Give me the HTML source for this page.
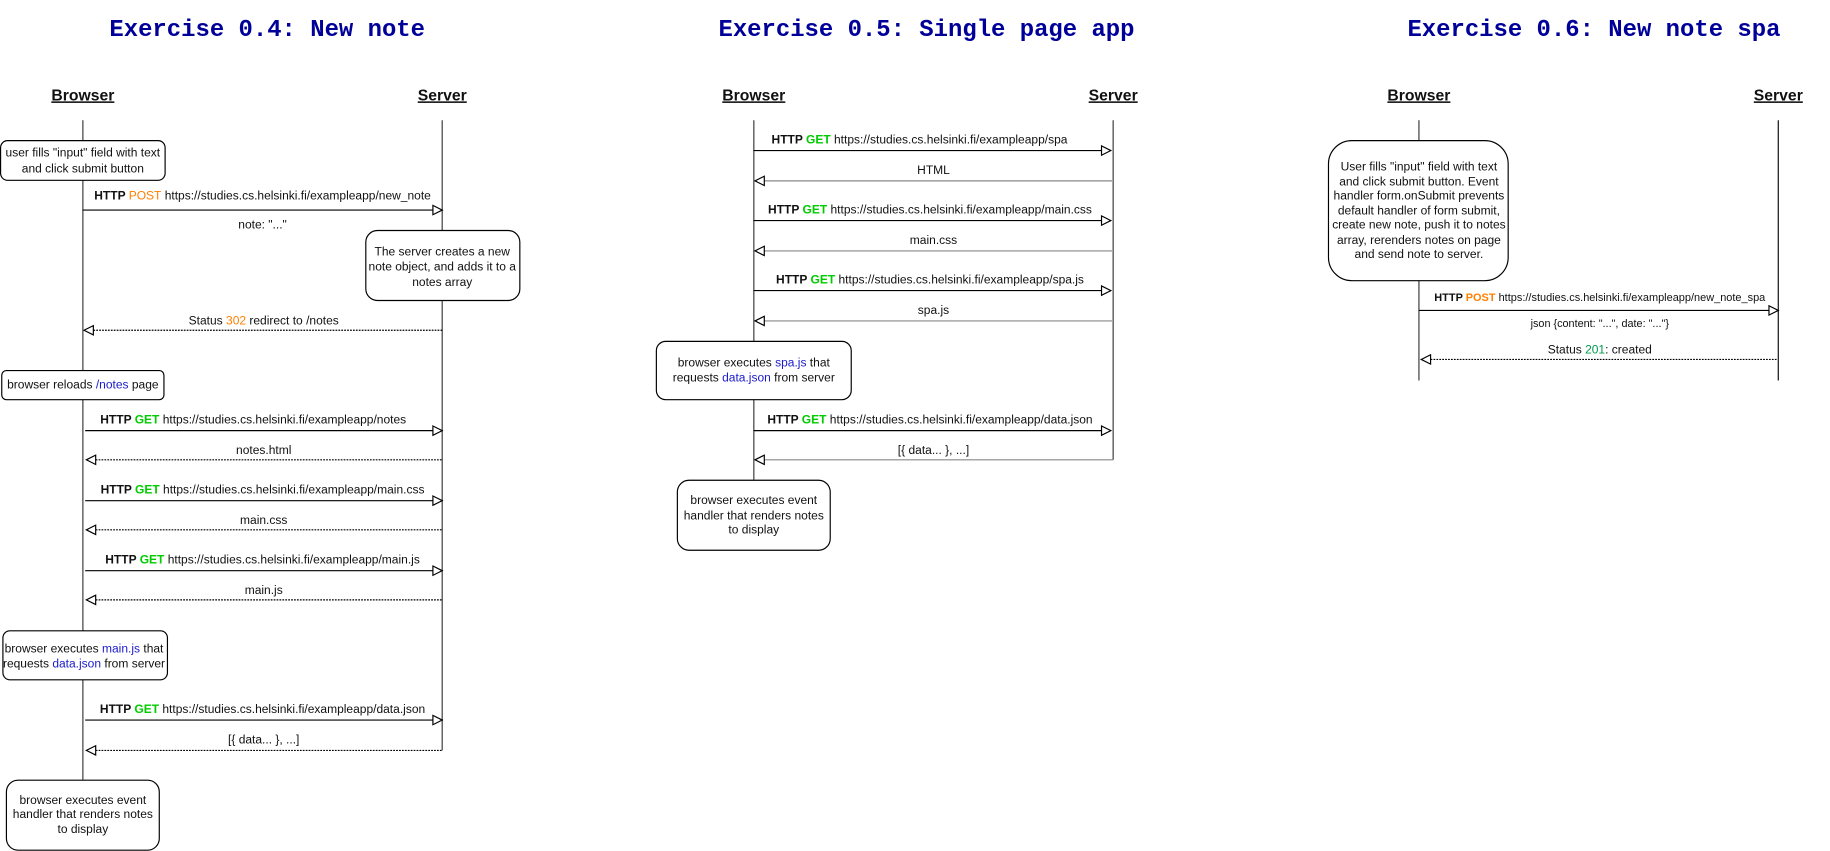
<!DOCTYPE html>
<html><head><meta charset="utf-8"><style>
html,body{margin:0;padding:0;background:#fff;width:1830px;height:851px;overflow:hidden}
svg{display:block}
text{font-family:"Liberation Sans",sans-serif;font-size:10.3px;fill:#111}
.t{font-family:"Liberation Mono",monospace;font-weight:bold;font-size:20.5px;fill:#000099}
.h{font-weight:bold;font-size:13.5px;text-decoration:underline}
.b{font-weight:bold}
.post{fill:#ff8000}.get{fill:#00cc00}.lnk{fill:#1a1acc}.ok{fill:#00994d}
.life{stroke:#666;stroke-width:1.3}
.lifek{stroke:#222;stroke-width:1.1}
.req{stroke:#000;stroke-width:1;fill:none}
.ret{stroke:#000;stroke-width:1;stroke-dasharray:1.5 1;fill:none}
.ret2{stroke:#888;stroke-width:1;fill:none}
.box{fill:#fff;stroke:#000;stroke-width:1}
.hd{fill:#fff;stroke:#000;stroke-width:1}
</style></head><body>
<svg width="1830" height="851" viewBox="0 0 1568.3 729.2" preserveAspectRatio="none" xmlns="http://www.w3.org/2000/svg">
<text class="t" x="229" y="31" text-anchor="middle">Exercise 0.4: New note</text>
<text class="h" x="71" y="86" text-anchor="middle">Browser</text>
<text class="h" x="379" y="86" text-anchor="middle">Server</text>
<line class="life" x1="71" y1="103" x2="71" y2="668"/>
<line class="life" x1="379" y1="103" x2="379" y2="643"/>

<rect class="box" x="0.5" y="120.5" width="141" height="34" rx="6"/>
<text x="71" y="134" text-anchor="middle">user fills "input" field with text</text>
<text x="71" y="148" text-anchor="middle">and click submit button</text>

<text x="225" y="171" text-anchor="middle"><tspan class="b">HTTP </tspan><tspan class="post">POST</tspan> https://studies.cs.helsinki.fi/exampleapp/new_note</text>
<line class="req" x1="71" y1="180" x2="371" y2="180"/>
<path class="hd" d="M371,176 L379,180 L371,184 Z"/>
<text x="225" y="196" text-anchor="middle">note: "..."</text>

<rect class="box" x="313.5" y="197.5" width="132" height="60" rx="10"/>
<text x="379" y="219" text-anchor="middle">The server creates a new</text>
<text x="379" y="232" text-anchor="middle">note object, and adds it to a</text>
<text x="379" y="245" text-anchor="middle">notes array</text>

<text x="226" y="278" text-anchor="middle">Status <tspan class="post">302</tspan> redirect to /notes</text>
<line class="ret" x1="80" y1="283" x2="379" y2="283"/>
<path class="hd" d="M80,279 L72,283 L80,287 Z"/>

<rect class="box" x="1.5" y="317.5" width="139" height="25" rx="4"/>
<text x="71" y="333" text-anchor="middle">browser reloads <tspan class="lnk">/notes</tspan> page</text>

<text x="217" y="363" text-anchor="middle"><tspan class="b">HTTP </tspan><tspan class="get b">GET</tspan> https://studies.cs.helsinki.fi/exampleapp/notes</text>
<line class="req" x1="73" y1="369" x2="371" y2="369"/>
<path class="hd" d="M371,365 L379,369 L371,373 Z"/>
<text x="226" y="389" text-anchor="middle">notes.html</text>
<line class="ret" x1="82" y1="394" x2="379" y2="394"/>
<path class="hd" d="M82,390 L74,394 L82,398 Z"/>

<text x="225" y="423" text-anchor="middle"><tspan class="b">HTTP </tspan><tspan class="get b">GET</tspan> https://studies.cs.helsinki.fi/exampleapp/main.css</text>
<line class="req" x1="73" y1="429" x2="371" y2="429"/>
<path class="hd" d="M371,425 L379,429 L371,433 Z"/>
<text x="226" y="449" text-anchor="middle">main.css</text>
<line class="ret" x1="82" y1="454" x2="379" y2="454"/>
<path class="hd" d="M82,450 L74,454 L82,458 Z"/>

<text x="225" y="483" text-anchor="middle"><tspan class="b">HTTP </tspan><tspan class="get b">GET</tspan> https://studies.cs.helsinki.fi/exampleapp/main.js</text>
<line class="req" x1="73" y1="489" x2="371" y2="489"/>
<path class="hd" d="M371,485 L379,489 L371,493 Z"/>
<text x="226" y="509" text-anchor="middle">main.js</text>
<line class="ret" x1="82" y1="514" x2="379" y2="514"/>
<path class="hd" d="M82,510 L74,514 L82,518 Z"/>

<rect class="box" x="2.5" y="540.5" width="141" height="42" rx="6"/>
<text x="72" y="559" text-anchor="middle">browser executes <tspan class="lnk">main.js</tspan> that</text>
<text x="72" y="572" text-anchor="middle">requests <tspan class="lnk">data.json</tspan> from server</text>

<text x="225" y="611" text-anchor="middle"><tspan class="b">HTTP </tspan><tspan class="get b">GET</tspan> https://studies.cs.helsinki.fi/exampleapp/data.json</text>
<line class="req" x1="73" y1="617" x2="371" y2="617"/>
<path class="hd" d="M371,613 L379,617 L371,621 Z"/>
<text x="226" y="637" text-anchor="middle">[{ data... }, ...]</text>
<line class="ret" x1="82" y1="643" x2="379" y2="643"/>
<path class="hd" d="M82,639 L74,643 L82,647 Z"/>

<rect class="box" x="5.5" y="668.5" width="131" height="60" rx="10"/>
<text x="71" y="689" text-anchor="middle">browser executes event</text>
<text x="71" y="701" text-anchor="middle">handler that renders notes</text>
<text x="71" y="714" text-anchor="middle">to display</text>

<text class="t" x="794" y="31" text-anchor="middle">Exercise 0.5: Single page app</text>
<text class="h" x="646" y="86" text-anchor="middle">Browser</text>
<text class="h" x="954" y="86" text-anchor="middle">Server</text>
<line class="life" x1="646" y1="103" x2="646" y2="411"/>
<line class="life" x1="954" y1="103" x2="954" y2="394"/>

<text x="788" y="123" text-anchor="middle"><tspan class="b">HTTP </tspan><tspan class="get b">GET</tspan> https://studies.cs.helsinki.fi/exampleapp/spa</text>
<line class="req" x1="646" y1="129" x2="944" y2="129"/>
<path class="hd" d="M944,125 L952,129 L944,133 Z"/>
<text x="800" y="149" text-anchor="middle">HTML</text>
<line class="ret2" x1="655" y1="155" x2="953" y2="155"/>
<path class="hd" d="M655,151 L647,155 L655,159 Z"/>

<text x="797" y="183" text-anchor="middle"><tspan class="b">HTTP </tspan><tspan class="get b">GET</tspan> https://studies.cs.helsinki.fi/exampleapp/main.css</text>
<line class="req" x1="646" y1="189" x2="944" y2="189"/>
<path class="hd" d="M944,185 L952,189 L944,193 Z"/>
<text x="800" y="209" text-anchor="middle">main.css</text>
<line class="ret2" x1="655" y1="215" x2="953" y2="215"/>
<path class="hd" d="M655,211 L647,215 L655,219 Z"/>

<text x="797" y="243" text-anchor="middle"><tspan class="b">HTTP </tspan><tspan class="get b">GET</tspan> https://studies.cs.helsinki.fi/exampleapp/spa.js</text>
<line class="req" x1="646" y1="249" x2="944" y2="249"/>
<path class="hd" d="M944,245 L952,249 L944,253 Z"/>
<text x="800" y="269" text-anchor="middle">spa.js</text>
<line class="ret2" x1="655" y1="275" x2="953" y2="275"/>
<path class="hd" d="M655,271 L647,275 L655,279 Z"/>

<rect class="box" x="562.5" y="292.5" width="167" height="50" rx="8"/>
<text x="646" y="314" text-anchor="middle">browser executes <tspan class="lnk">spa.js</tspan> that</text>
<text x="646" y="327" text-anchor="middle">requests <tspan class="lnk">data.json</tspan> from server</text>

<text x="797" y="363" text-anchor="middle"><tspan class="b">HTTP </tspan><tspan class="get b">GET</tspan> https://studies.cs.helsinki.fi/exampleapp/data.json</text>
<line class="req" x1="646" y1="369" x2="944" y2="369"/>
<path class="hd" d="M944,365 L952,369 L944,373 Z"/>
<text x="800" y="389" text-anchor="middle">[{ data... }, ...]</text>
<line class="ret2" x1="655" y1="394" x2="954" y2="394"/>
<path class="hd" d="M655,390 L647,394 L655,398 Z"/>

<rect class="box" x="580.5" y="411.5" width="131" height="60" rx="10"/>
<text x="646" y="432" text-anchor="middle">browser executes event</text>
<text x="646" y="445" text-anchor="middle">handler that renders notes</text>
<text x="646" y="457" text-anchor="middle">to display</text>

<text class="t" x="1366" y="31" text-anchor="middle">Exercise 0.6: New note spa</text>
<text class="h" x="1216" y="86" text-anchor="middle">Browser</text>
<text class="h" x="1524" y="86" text-anchor="middle">Server</text>
<line class="life" x1="1216" y1="103" x2="1216" y2="326"/>
<line class="lifek" x1="1524" y1="103" x2="1524" y2="326"/>

<rect class="box" x="1138.5" y="120.5" width="154" height="120" rx="20"/>
<text x="1216" y="146" text-anchor="middle">User fills "input" field with text</text>
<text x="1216" y="159" text-anchor="middle">and click submit button. Event</text>
<text x="1216" y="171" text-anchor="middle">handler form.onSubmit prevents</text>
<text x="1216" y="184" text-anchor="middle">default handler of form submit,</text>
<text x="1216" y="196" text-anchor="middle">create new note, push it to notes</text>
<text x="1216" y="209" text-anchor="middle">array, rerenders notes on page</text>
<text x="1216" y="221" text-anchor="middle">and send note to server.</text>

<text x="1371" y="258" text-anchor="middle" style="font-size:9.4px"><tspan class="b">HTTP </tspan><tspan class="post b">POST</tspan> https://studies.cs.helsinki.fi/exampleapp/new_note_spa</text>
<line class="req" x1="1216" y1="266" x2="1516" y2="266"/>
<path class="hd" d="M1516,262 L1524,266 L1516,270 Z"/>
<text x="1371" y="280" text-anchor="middle" style="font-size:9.3px">json {content: "...", date: "..."}</text>
<text x="1371" y="303" text-anchor="middle">Status <tspan class="ok">201</tspan>: created</text>
<line class="ret" x1="1226" y1="308" x2="1523" y2="308"/>
<path class="hd" d="M1226,304 L1218,308 L1226,312 Z"/>
</svg>
</body></html>
